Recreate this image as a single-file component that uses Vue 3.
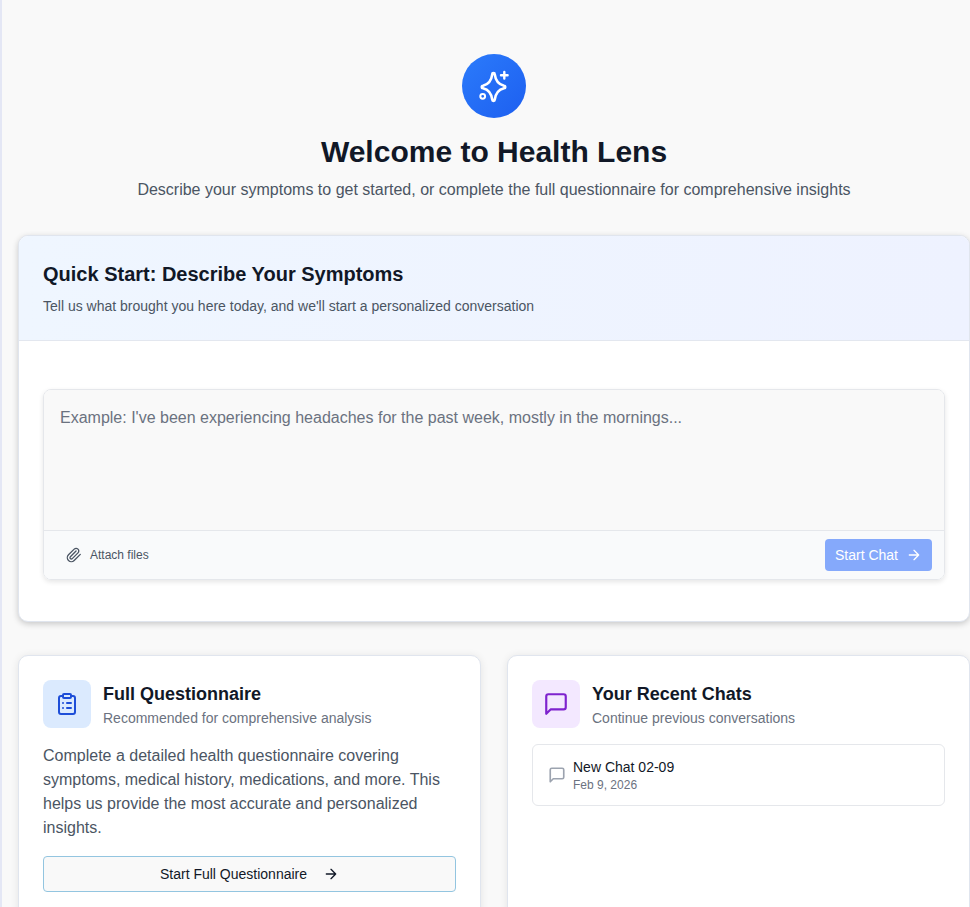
<script setup>
import { ref } from 'vue'

const message = ref('')

const chats = [
  { id: 1, title: 'New Chat 02-09', date: 'Feb 9, 2026' }
]
</script>

<template>
  <div class="page">
    <header class="hero">
      <div class="hero-icon">
        <svg width="40" height="40" viewBox="0 0 40 40" fill="none" stroke="#fff" stroke-width="2.6" stroke-linecap="round" stroke-linejoin="round">
          <path d="M18.3 8.2a1.2 1.2 0 0 1 2.4 0C21.5 14.5 24.5 18.5 30 19.8a1.2 1.2 0 0 1 0 2.4C24.5 23.5 21.5 27.5 20.7 33.8a1.2 1.2 0 0 1-2.4 0C17.5 27.5 14.5 23.5 9 22.2a1.2 1.2 0 0 1 0-2.4C14.5 18.5 17.5 14.5 18.3 8.2Z" />
          <path d="M30.3 6v6.6M27 9.3h6.600" stroke-width="2.4" />
          <circle cx="8.7" cy="30.3" r="2.4" stroke-width="2" />
        </svg>
      </div>
      <h1>Welcome to Health Lens</h1>
      <p>Describe your symptoms to get started, or complete the full questionnaire for comprehensive insights</p>
    </header>

    <section class="card quick">
      <div class="quick-head">
        <h2>Quick Start: Describe Your Symptoms</h2>
        <p>Tell us what brought you here today, and we'll start a personalized conversation</p>
      </div>
      <div class="quick-body">
        <div class="composer">
          <textarea v-model="message" placeholder="Example: I've been experiencing headaches for the past week, mostly in the mornings..."></textarea>
          <div class="composer-bar">
            <button class="attach" type="button">
              <svg width="16" height="16" viewBox="0 0 24 24" fill="none" stroke="#4b5563" stroke-width="2" stroke-linecap="round" stroke-linejoin="round">
                <path d="m21.44 11.05-9.19 9.19a6 6 0 0 1-8.49-8.49l8.57-8.57A4 4 0 1 1 18 8.84l-8.59 8.57a2 2 0 0 1-2.83-2.83l8.49-8.48" />
              </svg>
              Attach files
            </button>
            <button class="start-chat" type="button">
              Start Chat
              <svg width="16" height="16" viewBox="0 0 24 24" fill="none" stroke="#fff" stroke-width="2" stroke-linecap="round" stroke-linejoin="round">
                <path d="M5 12h14M12 5l7 7-7 7" />
              </svg>
            </button>
          </div>
        </div>
      </div>
    </section>

    <div class="columns">
      <section class="card panel">
        <div class="panel-head">
          <div class="panel-icon blue">
            <svg width="24" height="24" viewBox="0 0 24 24" fill="none" stroke="#1d4ed8" stroke-width="2" stroke-linecap="round" stroke-linejoin="round">
              <rect x="8" y="2" width="8" height="4" rx="1" />
              <path d="M16 4h2a2 2 0 0 1 2 2v14a2 2 0 0 1-2 2H6a2 2 0 0 1-2-2V6a2 2 0 0 1 2-2h2" />
              <path d="M12 11h4M12 16h4M8 11h.01M8 16h.01" />
            </svg>
          </div>
          <div>
            <h3>Full Questionnaire</h3>
            <p>Recommended for comprehensive analysis</p>
          </div>
        </div>
        <p class="panel-text">Complete a detailed health questionnaire covering symptoms, medical history, medications, and more. This helps us provide the most accurate and personalized insights.</p>
        <button class="outline" type="button">
          Start Full Questionnaire
          <svg width="16" height="16" viewBox="0 0 24 24" fill="none" stroke="#111827" stroke-width="2" stroke-linecap="round" stroke-linejoin="round">
            <path d="M5 12h14M12 5l7 7-7 7" />
          </svg>
        </button>
      </section>

      <section class="card panel">
        <div class="panel-head">
          <div class="panel-icon purple">
            <svg width="26" height="26" viewBox="0 0 24 24" fill="none" stroke="#7e22ce" stroke-width="2" stroke-linecap="round" stroke-linejoin="round">
              <path d="M21 15a2 2 0 0 1-2 2H7l-4 4V5a2 2 0 0 1 2-2h14a2 2 0 0 1 2 2Z" />
            </svg>
          </div>
          <div>
            <h3>Your Recent Chats</h3>
            <p>Continue previous conversations</p>
          </div>
        </div>
        <div v-for="chat in chats" :key="chat.id" class="chat-row">
          <svg width="18" height="18" viewBox="0 0 24 24" fill="none" stroke="#9ca3af" stroke-width="2.2" stroke-linecap="round" stroke-linejoin="round">
            <path d="M21 15a2 2 0 0 1-2 2H7l-4 4V5a2 2 0 0 1 2-2h14a2 2 0 0 1 2 2Z" />
          </svg>
          <div>
            <div class="chat-title">{{ chat.title }}</div>
            <div class="chat-date">{{ chat.date }}</div>
          </div>
        </div>
      </section>
    </div>
  </div>
</template>

<style>
html,
body {
  margin: 0;
  overflow: hidden;
  background: #f9f9f9;
}
</style>

<style scoped>
.page {
  box-sizing: border-box;
  height: 907px;
  overflow: hidden;
  padding: 54px 0 0 16px;
  border-left: 2px solid #e4e7f5;
  background: #f9f9f9;
  font-family: "Liberation Sans", Arial, sans-serif;
  color: #111827;
}

.hero {
  text-align: center;
  margin-bottom: 33px;
}

.hero-icon {
  width: 64px;
  height: 64px;
  margin: 0 auto 16px;
  border-radius: 50%;
  background: linear-gradient(135deg, #2b7bfb 0%, #1d5ff0 100%);
  display: flex;
  align-items: center;
  justify-content: center;
}

h1 {
  margin: 0 0 8px;
  font-size: 30px;
  line-height: 36px;
  font-weight: 700;
}

.hero p {
  margin: 0;
  font-size: 16px;
  line-height: 24px;
  color: #4b5563;
}

.card {
  box-sizing: border-box;
  background: #fff;
  border: 1px solid #e0e5ee;
  border-radius: 10px;
}

.quick {
  overflow: hidden;
  margin-bottom: 33px;
  box-shadow: 0 2px 6px rgba(0, 0, 0, 0.2);
}

.quick-head {
  padding: 24px 24px 22px;
  height: 105px;
  box-sizing: border-box;
  background: linear-gradient(90deg, #eff6ff 0%, #eef2ff 100%);
  border-bottom: 1px solid #e3e7ef;
}

h2 {
  margin: 0 0 8px;
  font-size: 20px;
  line-height: 28px;
  font-weight: 700;
}

.quick-head p {
  margin: 0;
  font-size: 14px;
  line-height: 20px;
  color: #4b5563;
}

.quick-body {
  padding: 48px 24px 41px;
}

.composer {
  border: 1px solid #e5e7eb;
  border-radius: 8px;
  overflow: hidden;
  box-shadow: 0 2px 5px rgba(0, 0, 0, 0.1);
}

textarea {
  display: block;
  box-sizing: border-box;
  width: 100%;
  height: 140px;
  padding: 16px;
  border: 0;
  outline: 0;
  resize: none;
  background: #f9f9f9;
  font-family: inherit;
  font-size: 16px;
  line-height: 24px;
  color: #111827;
}

textarea::placeholder {
  color: #6b7280;
}

.composer-bar {
  display: flex;
  align-items: center;
  justify-content: space-between;
  height: 49px;
  box-sizing: border-box;
  padding: 0 12px 0 22px;
  border-top: 1px solid #e5e7eb;
  background: #f9fafb;
}

button {
  font-family: inherit;
  cursor: pointer;
}

.attach {
  display: flex;
  align-items: center;
  gap: 8px;
  padding: 0;
  border: 0;
  background: none;
  font-size: 12px;
  color: #4b5563;
}

.start-chat {
  display: flex;
  align-items: center;
  gap: 8px;
  height: 32px;
  padding: 0 10px;
  border: 0;
  border-radius: 4px;
  background: #85a9fb;
  color: #fff;
  font-size: 14px;
}

.columns {
  display: grid;
  grid-template-columns: 1fr 1fr;
  gap: 26px;
}

.panel {
  padding: 24px;
  height: 300px;
  box-shadow: 0 1px 8px rgba(0, 0, 0, 0.09);
}

.panel-head {
  display: flex;
  align-items: center;
  gap: 12px;
  margin-bottom: 16px;
}

.panel-icon {
  flex: none;
  width: 48px;
  height: 48px;
  border-radius: 8px;
  display: flex;
  align-items: center;
  justify-content: center;
}

.blue {
  background: #dbeafe;
}

.purple {
  background: #f3e8ff;
}

h3 {
  margin: 0;
  font-size: 18px;
  line-height: 28px;
  font-weight: 700;
}

.panel-head p {
  margin: 0;
  font-size: 14px;
  line-height: 20px;
  color: #6b7280;
}

.panel-text {
  margin: 0 0 16px;
  font-size: 16px;
  line-height: 24px;
  color: #4b5563;
}

.outline {
  display: flex;
  align-items: center;
  justify-content: center;
  gap: 16px;
  width: 100%;
  height: 36px;
  border: 1px solid #93c5e0;
  border-radius: 4px;
  background: #f9f9f9;
  color: #111827;
  font-size: 14px;
}

.chat-row {
  display: flex;
  align-items: center;
  gap: 7px;
  height: 62px;
  box-sizing: border-box;
  padding: 0 15px;
  border: 1px solid #e5e7eb;
  border-radius: 6px;
}

.chat-title {
  font-size: 14px;
  line-height: 20px;
  color: #111827;
}

.chat-date {
  font-size: 12px;
  line-height: 16px;
  color: #6b7280;
}
</style>
